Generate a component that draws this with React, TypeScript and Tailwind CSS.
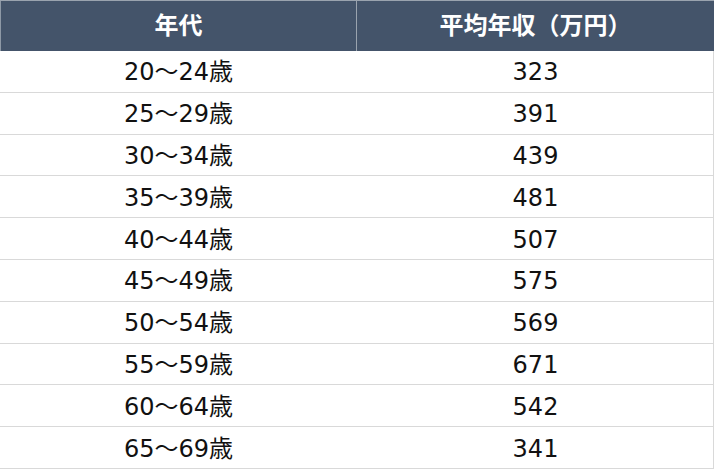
import React from 'react';

const rows: [string, number][] = [
  ['20～24歳', 323],
  ['25～29歳', 391],
  ['30～34歳', 439],
  ['35～39歳', 481],
  ['40～44歳', 507],
  ['45～49歳', 575],
  ['50～54歳', 569],
  ['55～59歳', 671],
  ['60～64歳', 542],
  ['65～69歳', 341],
];

export default function App() {
  return (
    <div
      className="w-[714px] h-[469px] bg-white overflow-hidden text-[24px] text-[#111]"
      style={{ fontFamily: '"DejaVu Sans", "Noto Sans CJK JP", sans-serif' }}
    >
      {/* Header */}
      <div className="grid grid-cols-[357px_357px] h-[51px] bg-[#44546a] border-t border-[#9aa3ae] text-white font-bold">
        <div className="flex items-center justify-center border-l border-[#8e99a6] border-r border-r-[#9aa3ae]">
          年代
        </div>
        <div className="flex items-center justify-center">平均年収（万円）</div>
      </div>

      {/* Body */}
      {rows.map(([age, income]) => (
        <div
          key={age}
          className="grid grid-cols-[357px_357px] h-[41.8px] border-b border-[#d9d9d9] border-r"
        >
          <div className="flex items-center justify-center leading-none pt-[2px]">{age}</div>
          <div className="flex items-center justify-center leading-none pt-[2px]">{income}</div>
        </div>
      ))}
    </div>
  );
}
